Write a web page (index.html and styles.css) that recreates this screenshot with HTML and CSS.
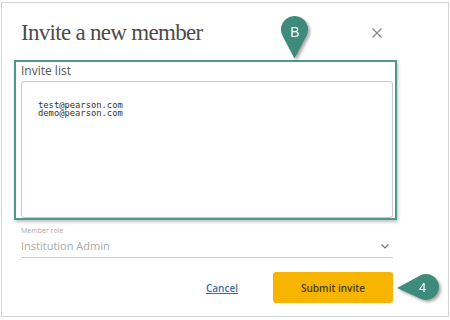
FILE: index.html
```html
<!DOCTYPE html>
<html lang="en">
<head>
    <meta charset="UTF-8">
    <title>Invite a new member</title>
    <link rel="stylesheet" href="styles.css">
</head>
<body>
    <div class="modal">
        <div class="modal-header">
            <h1>Invite a new member</h1>
            <button class="close" aria-label="Close">
                <svg viewBox="0 0 10 10" width="10" height="10" stroke="currentColor" stroke-width="1.2">
                    <line x1="0.5" y1="0.5" x2="9.5" y2="9.5"></line>
                    <line x1="9.5" y1="0.5" x2="0.5" y2="9.5"></line>
                </svg>
            </button>
        </div>

        <div class="highlight">
            <label class="field-label" for="inviteList">Invite list</label>
            <textarea id="inviteList" class="invite-list">test@pearson.com
demo@pearson.com</textarea>
        </div>

        <div class="role">
            <div class="role-label">Member role</div>
            <div class="role-select">
                <span>Institution Admin</span>
                <svg class="chevron" viewBox="0 0 8 5" width="8" height="5" fill="none" stroke="currentColor" stroke-width="1.2">
                    <polyline points="0.5 0.5 4 4 7.5 0.5"></polyline>
                </svg>
            </div>
        </div>

        <div class="modal-footer">
            <a href="#" class="cancel">Cancel</a>
            <button class="submit">Submit invite</button>
        </div>
    </div>

    <!-- callout markers -->
    <svg class="pin pin-b" viewBox="0 0 32 48" width="32" height="48">
        <path d="M14.5 43.5 L2.55 20.78 A13.5 13.5 0 1 1 26.45 20.78 Z"></path>
        <text x="15" y="22">B</text>
    </svg>
    <svg class="pin pin-4" viewBox="0 0 50 34" width="50" height="34">
        <path d="M2 16 L25.17 3.38 A13 13 0 1 1 25.17 26.62 Z"></path>
        <text x="27.5" y="20">4</text>
    </svg>
</body>
</html>
```

FILE: styles.css
```css
:root {
    --text: #4b4b4b;
    --muted: #a9a9a9;
    --line: #cccccc;
    --teal: #3f8b7b;
    --teal-light: #4e9a8a;
    --amber: #f8b500;
    --link: #3b6fa3;
}

* {
    margin: 0;
    padding: 0;
    box-sizing: border-box;
}

body {
    position: relative;
    font-family: "Open Sans", sans-serif;
    background-color: #fff;
    color: var(--text);
}

.modal {
    margin: 2px 1px;
    height: 315px;
    border: 1px solid #d3d3d3;
    padding: 15px 55px 0 19px;
    display: flex;
    flex-direction: column;
}

.modal-header {
    display: flex;
    justify-content: space-between;
    align-items: center;
}

.modal-header h1 {
    font-family: "Liberation Serif", serif;
    font-weight: normal;
    font-size: 23px;
    letter-spacing: -0.7px;
    line-height: 30px;
    color: var(--text);
}

.close {
    background: none;
    border: none;
    color: #8a8a8a;
    margin-right: 11px;
    display: flex;
}

.highlight {
    margin: 12px -4px 0 -7px;
    padding: 1px 2px 0 5px;
    border: 2px solid var(--teal-light);
    box-shadow: 1px 2px 3px rgba(0, 0, 0, 0.25);
}

.field-label {
    display: block;
    font-size: 12px;
    line-height: 16px;
    color: #555;
}

.invite-list {
    display: block;
    width: 100%;
    height: 137px;
    margin-top: 2px;
    padding: 19px 16px 0;
    border: 1px solid #c8c8c8;
    border-radius: 3px;
    font-family: "DejaVu Sans Mono", monospace;
    font-size: 8.8px;
    line-height: 8.4px;
    color: #333;
    resize: none;
    overflow: hidden;
}

.role {
    margin-top: 6px;
}

.role-label {
    font-size: 7px;
    line-height: 9px;
    color: var(--muted);
}

.role-select {
    margin-top: 4px;
    display: flex;
    justify-content: space-between;
    align-items: center;
    font-size: 11px;
    line-height: 14px;
    color: var(--muted);
    padding-bottom: 4px;
    border-bottom: 1px solid var(--line);
}

.chevron {
    color: #777;
    margin-right: 4px;
}

.modal-footer {
    margin-top: 14px;
    display: flex;
    justify-content: flex-end;
    align-items: center;
    gap: 35px;
}

.cancel {
    font-size: 10px;
    font-weight: 600;
    color: var(--link);
}

.submit {
    width: 120px;
    height: 31px;
    background-color: var(--amber);
    border: none;
    border-radius: 3px;
    font-family: "Open Sans", sans-serif;
    font-size: 10px;
    font-weight: 600;
    color: #4a3b12;
}

.pin {
    position: absolute;
    filter: drop-shadow(2px 2px 1.5px rgba(0, 0, 0, 0.35));
}

.pin path {
    fill: var(--teal);
}

.pin text {
    fill: #fff;
    font-family: "Liberation Sans", sans-serif;
    text-anchor: middle;
}

.pin-b {
    left: 280px;
    top: 15px;
}

.pin-b text {
    font-size: 14px;
}

.pin-4 {
    left: 395px;
    top: 272px;
}

.pin-4 text {
    font-size: 13px;
}
```
